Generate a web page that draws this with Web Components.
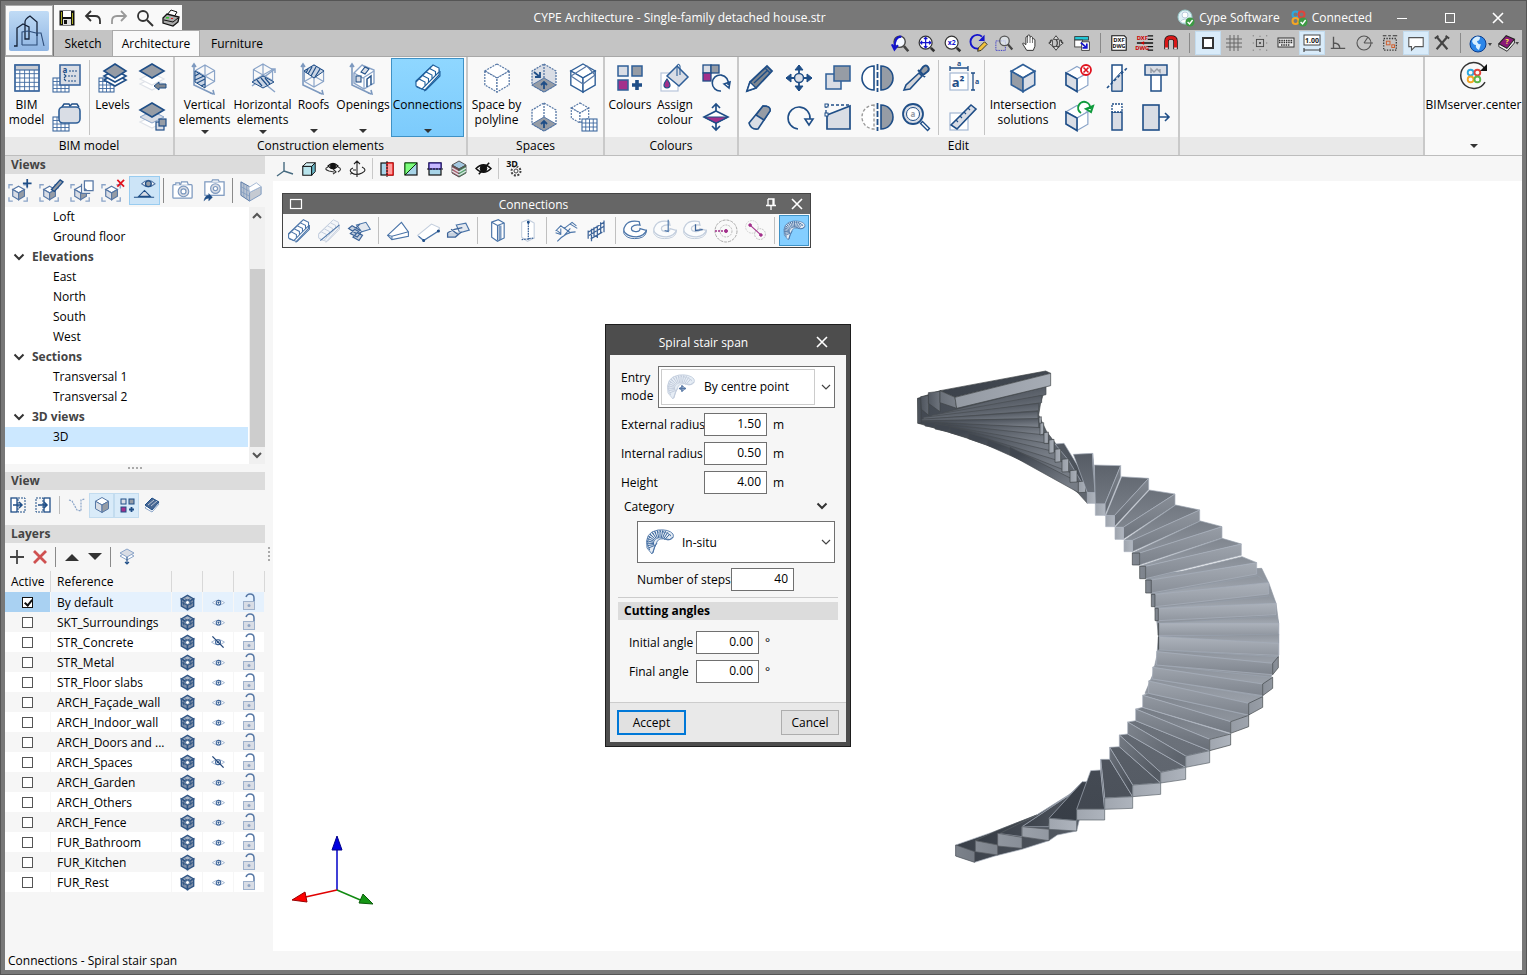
<!DOCTYPE html>
<html lang="en">
<head>
<meta charset="utf-8">
<title>CYPE Architecture</title>
<style>
html,body{margin:0;height:100%}
body{font:12px/15px "Open Sans","Noto Sans",sans-serif;color:#000;background:#787878}
</style>
</head>
<body>
<cy-app></cy-app>
<script>
/* ---------- drawing helpers ---------- */
const N='#1f4e87', F='#d9dde5', G='#969ca5', L='#8aa4c8', M='#a3308b', W='#fdfdfd';
const P=(d,f='none',s=N,w=1.5,x='')=>`<path d="${d}" fill="${f}" stroke="${s}" stroke-width="${w}" ${x}/>`;
const C=(x,y,r,f='none',s=N,w=1.5,e='')=>`<circle cx="${x}" cy="${y}" r="${r}" fill="${f}" stroke="${s}" stroke-width="${w}" ${e}/>`;
const R=(x,y,w,h,f='none',s=N,sw=1.5,e='')=>`<rect x="${x}" y="${y}" width="${w}" height="${h}" fill="${f}" stroke="${s}" stroke-width="${sw}" ${e}/>`;
const T=(x,y,t,size,fill=N,e='')=>`<text x="${x}" y="${y}" font-size="${size}" fill="${fill}" font-weight="bold" text-anchor="middle" font-family="Noto Sans,sans-serif" ${e}>${t}</text>`;
const D='stroke-dasharray="2 1"';
const cube=(x,y,h,t,l,r,s=N,w=1.5,e='')=>{
  const a=h*.87,b=h/2;
  return P(`M${x} ${y-h}l${a} ${b}l${-a} ${b}l${-a} ${-b}z`,t,s,w,e)+P(`M${x-a} ${y-b}l${a} ${b}v${h}l${-a} ${-b}z`,l,s,w,e)+P(`M${x+a} ${y-b}l${-a} ${b}v${h}l${a} ${-b}z`,r,s,w,e);
};
const wireCube=(x,y,h,s=L,w=1.2,e='')=>{
  const a=h*.87,b=h/2;
  return P(`M${x} ${y-h}l${a} ${b}v${h}l${-a} ${b}l${-a} ${-b}v${-h}zM${x} ${y-h}v${2*h}M${x-a} ${y-b}l${2*a} ${h}M${x+a} ${y-b}l${-2*a} ${h}`,'none',s,w,e);
};
const roomCube=(back,floor)=>P('M16 2l12 7v14l-12 7l-12-7V9z',back,'#5677a5',1.3,D)+P('M16 16l12 7l-12 7l-12-7z',floor,'#5677a5',1)+P('M16 2v14','none','#5677a5',1.3,D)+P('M16 27v-7M13 23l3-3l3 3','none',N,1.8);
const rhomb=(x,y,a,b,f,s=N,w=1.6)=>P(`M${x} ${y-b}l${a} ${b}l${-a} ${b}l${-a} ${-b}z`,f,s,w);
const grid=(x,y,w,h,n,m,s='#3f6aa0',f='#fff')=>{
  let d='';for(let i=1;i<n;i++)d+=`M${x+w*i/n} ${y}v${h}`;for(let i=1;i<m;i++)d+=`M${x} ${y+h*i/m}h${w}`;
  return R(x,y,w,h,f,s,1.1)+P(d,'none',s,.9);
};
const hatch=(pts,lines)=>P(pts,'#c9d4e4',N,1)+P(lines,'none',N,1.2);
const axes=P('M5 3v20l19 9M3 5l2-3l2 3M21 31l4 1l-1-4','none','#7d99bf',1.6);
const lock=P('M7 5q1-3 4-3q4 0 4 4v4','none','#5677a5',1.5)+R(4.5,9.5,11,8,F,'#9fb2cc',1)+C(10,13.5,1.5,'#8fa5c4','none',0);
const eye=P('M1 8Q10 1 19 8Q10 15 1 8z','#fff','#9bb1cf',1.3)+C(10,8,3.400,'#fff','#3d6499',1.6)+C(10,8,1,N,N,1);
const arcSteps=(c,lw=1)=>{ /* fan of treads seen from above */
  let s='';for(let i=0;i<15;i++){const a=(150+i*12)*Math.PI/180,o=13,n=6;
    s+=P(`M${(16+n*Math.cos(a)).toFixed(1)} ${(17+n*.8*Math.sin(a)).toFixed(1)}L${(16+o*Math.cos(a)).toFixed(1)} ${(16+o*.9*Math.sin(a)).toFixed(1)}l1 2`,'none',c,lw);}
  return P('M3 22Q0 6 14 4Q25 3 29 8Q31 13 24 14Q14 10 12 18L8 28z','#e6edf5',c,.8)+s+P('M9 27Q10 20 13 17M22 13q4 2 7-2','none',c,.9);
};
const stairs=(c,f='#fff',w=1.1)=>{
  let s=P('M3 18L18 4l8 3v5L12 27l-8-3z',f,c,w);
  for(let i=4;i>=0;i--){const x=3+i*3.5,y=19-i*3.500;s+=P(`M${x} ${y}l3-3l6 3v4l-3 3l-6-3z`,f,c,w);}
  return s+P('M11 28l2-1L27 13V8','none',c,w);
};
const zoomLens=(c='#222')=>C(10,9,6.5,'#f4f8ff',c,1.6)+P('M15 14l5 6','none',c,3);
const boxIcon=P('M1 11V7h4M16 7h4v4M1 20v4h4M16 24h4v-4','none',L,1.4)+cube(11,15.5,7,'#fff',F,G,'#5677a5',1.2);
const bim=(x,y,k)=>C(x-k,y-k,k*.85,'none','#2ba8e0',k*.55)+C(x+k,y-k,k*.85,'none','#e0443c',k*.55)+C(x-k,y+k,k*.85,'none','#f5a623',k*.55)+C(x+k,y+k,k*.85,'none','#5cb548',k*.55);
const tick=(x,y)=>C(x,y,4.5,'#3c9a44','none',0)+P(`M${x-2.4} ${y}l2 2l3-4`,'none','#fff',1.4);
const disc=(c,f='#fff')=>P('M2 15v3q3 6 12 6q11 0 13-7v-3',f,c,1.1)+P('M19 5Q8 3 4 9T4 18Q8 22 16 22Q25 21 27 15L20 13Q20 17 14 16Q9 15 11 11Q14 8 20 9z',f,c,1.4);

/* ---------- icon table: name -> [box size, drawing, shown size] ---------- */
const ICONS={
app:[40,`<defs><linearGradient id="a" x2="0" y2="1"><stop stop-color="#c0dbf5"/><stop offset="1" stop-color="#8fb5e3"/></linearGradient></defs>`+R(0,0,40,40,'url(#a)','none',0,'rx="2"')+P('M5 35h3V17l6-4l6 3v12h-4V11q0-3 5-6l7 6v14','none','#152238',1.3)+P('M13 34V21l6-1l8 2h5l3 13M13 34h15V22','none','#2d4c78',1.1)],
save:[16,R(1,1,14,14,'#111','#111',1)+R(4,1,8,6,'#fff','none',0)+R(4,9,8,6,'#ddd','none',0)+R(5,10,3,4,'#111','none',0)+R(2,2,1,12,'#a8a820','none',0)+R(13,3,1,11,'#a8a820','none',0)],
undo:[18,P('M7 2L2 7l5 5M2 7h9q5 0 5 5v3','none','#333',1.8)],
redo:[18,P('M11 2l5 5l-5 5M16 7H7q-5 0-5 5v3','none','#999',1.8)],
find:[18,C(7,7,5,'none','#333',1.8)+P('M11 11l6 6','none','#333',2)],
print:[18,P('M5 6l4-5l6 2l-3 5z','#fff','#111',1)+P('M1 9l4-4l12 3l-1 5l-5 4l-10-3z','#aaa','#111',1.3)+P('M2 11l9 2l5-4','none','#111',1)+R(4,8,3,1.5,'#3c3','none',0)+R(9,9,2,1,'#d22','none',0)],
user:[18,C(8,8,7,'#dff0f6','#9cc',1)+C(8,6,3,'#fff','#bcd',1)+P('M3 13q5-6 10 0','#fff','#bcd',1)+tick(13,13)],
conn:[18,C(5.500,5.500,3,'none','#2ba8e0',2)+C(11.500,5.500,3,'none','#e0443c',2)+C(5.500,12,3,'none','#f5a623',2)+tick(13,13)],
min:[14,P('M2 7.5h10','none','#fff',1)],max:[14,R(2.5,2.5,9,9,'none','#fff',1)],close:[14,P('M2 2l10 10M12 2L2 12','none','#fff',1.6)],
zPrev:[22,zoomLens('#444')+P('M12 3Q4 3 4 16M1 12l3 6l4-5','none','#1313cc',2.4),19],
zAll:[22,C(10,10,7.5,'#fff','#333',1.4)+P('M16 16l4 4','none','#333',3)+P('M10 4v12M4 10h12M8 6l2-2l2 2M8 14l2 2l2-2M6 8l-2 2l2 2M14 8l2 2l-2 2','none','#1313cc',1.4),19],
zx2:[22,C(10,10,7.5,'#fff','#333',1.4)+P('M16 16l4 4','none','#333',3)+T(10,13,'x2',8,'#1313cc'),19],
redraw:[22,P('M15 3A8 8 0 1 0 15 15','none','#1313cc',2.2)+P('M18 1v7h-7z','#1313cc','none',0)+P('M10 20l1-4l7-7l3 3l-7 7z','#f3c33c','#222',1),19],
zWin:[22,R(1,8,11,11,'none','#1313cc',1,'stroke-dasharray="1 1"')+C(11,8,5.5,'#e8f0f6aa','#555',1.5)+P('M15 12l5 6','none','#444',2.6),19],
pan:[22,P('M7 20L2 12q0-2 4 1V4q2-2 2 0V2q2-2 3 0v2q2-2 3 0v2q2-1 3 1v8l-2 5z','#fff','#333',1.2)+P('M8 4v7M11 4v7M14 5v6','none','#555',1),18],
orbit:[22,P('M11 3l3 4H8zM11 19l-3-4h6zM3 11l4-3v6zM19 11l-4 3V8z','#eee','#444',1.1)+P('M7 8q-3-1-2 3M15 8q3-1 2 3M7 14l2 2M15 14l-2 2M11 7q3 4 0 8','none','#444',1.4),20],
export:[22,R(2,3,16,4,'#22c8d8','#333',1)+R(2,7,9,8,'#fff','#333',1)+P('M10 9h9v10H10z','#fff','#333',1)+P('M9 10l7 6M16 11v5h-5','none','#1313cc',2),19],
dxf:[20,P('M2 2h14l2 2v14H2z','#fff','#111',1.2)+T(10,9,'DXF',6.5,'#111')+T(10,16,'DWG',6,'#111'),18],
dxfc:[20,T(7,7,'DXF',6.5,'#c00')+T(7,18,'DWG',6.5,'#c00')+P('M13 2h6M13 6h6M1 10h18M13 14h6M13 18h6','none','#111',1.4)+P('M9 8v4L5 10z','#c00','none',0),18],
magnet:[20,P('M5 17V8q0-4 5-4t5 4v9','none','#111',5)+P('M5 16V8q0-4 5-4t5 4v8','none','#d81818',3.4)+P('M3.5 16h3M13.500 16h3','none','#ddd',2),18],
square:[20,R(5,5,10,10,'#fff','#333',2)],
grid:[20,P('M6 2v16M14 2v16M2 6h16M2 14h16M10 2v16M2 10h16','none','#666',1)],
snap:[20,R(6,6,8,8,'none','#444',1)+R(9,9,2,2,'#444','none',0)+P('M2 2h1M10 2v1M17 2h1M2 10h1M17 10h1M2 18h1M10 17v1M17 18h1','none','#555',1),18],
keys:[20,R(2,5,16,9,'#eee','#333',1)+P('M3 7.500h14M3 9.500h14M5 12h9','none','#333',1.3,'stroke-dasharray="1.500 .8"')],
dims:[20,R(2,2,16,10,'#fff','#444',1)+T(10,10,'1.00',7,'#222')+P('M2 15v4M18 15v4M2 17h16','none','#444',1.2)],
angle:[20,P('M5 3v13h13M5 10q7 0 7 6M2 16h3','none','#555',1.5),18],
polar:[20,C(10,10,7,'none','#555',1.1)+P('M10 10h9M10 10l4-6','none','#555',1.1)],
sel:[20,R(3,5,14,13,'none','#333',1.4,'stroke-dasharray="1.500 1.500"')+R(6,8,4,4,'none','#d06030',1.1)+R(12,12,3,3,'none','#d06030',1.1)+P('M2 2h4M8 2h3M13 2h5','none','#333',1.2),18],
note:[20,P('M2 4h16v10H9l-4 4v-4H2z','#fff','#555',1.2),18],
tools:[20,P('M4 3l12 14M16 3L4 17','none','#444',2.4)+P('M2 5l4-3M14 2l4 3','none','#444',2),18],
globe:[24,C(10,12,8,'#2c86e8','#0a3c8c',1)+P('M4 9q3-6 8-4q0 4-3 4q1 4 4 3l-2 6q-4-2-3-5q-3 0-4-4z','#d8efff','none',0)+P('M20 11h4l-2 3z','#444','none',0)],
book:[24,P('M2 13L10 4l9 4l-8 10z','#8a1a78','#222',1.2)+P('M2 13v3l9 5l8-9V8l-8 10z','#eee','#222',1)+T(11,13,'?',8,'#ffe14a')+P('M20 11h4l-2 3z','#444','none',0),22],
bimTable:[32,grid(4,3,24,26,5,6)+R(4,3,24,5,'#c9ccd3','#3f6aa0',1.2)+R(4,3,24,26,'none','#3f6aa0',1.5)],
listTable:[32,grid(2,16,16,14,4,4)+R(9,3,20,20,F,'#3f6aa0',1.6)+T(14,11,'a',8)+P('M18 9h8M17 14h9M17 19h9','none',N,1.2,D)+P('M13 12l2 2l-2 2M13 17l2 2','none',N,1.1)],
folderTable:[32,grid(2,16,16,14,4,4)+P('M11 6l2-3h5l1 2l2-2h5l2 3','#fff',N,1.4)+R(8,6,21,16,F,'#2f5f98',1.6,'rx="4"')],
levels:[32,grid(2,16,15,14,4,4)+rhomb(18,18,11,6,'#fff')+rhomb(18,14,11,6,'#fff')+rhomb(18,9,11,7,G)],
level1:[32,rhomb(15,22,12,6,'#fff','#dfe3e9',1.2)+rhomb(15,17,12,6,'#fff','#dfe3e9',1.2)+rhomb(15,9,12,7,G)+P('M17 24l5-4v2h7v4h-7v2z','#7d858f',N,1)],
level2:[32,rhomb(15,21,12,6,'#fff','#dfe3e9',1.2)+rhomb(15,16,12,6,F,L,1)+rhomb(15,9,12,7,G)+R(19,21,8,8,F,N,1.2)+R(22,18,7,7,G,N,1.2)],
vert:[32,wireCube(16,14,11)+axes+hatch('M6 9l10 6v11L6 20z','M6 14l5-3M6 18l9-4M8 21l8-4M12 24l4-2')],
horiz:[32,wireCube(16,13,11)+P('M5 24L28 7M24 7h4v4M18 22l10 8','none',L,1.5)+hatch('M16 14l11 6l-11 6l-11-6z','M10 18l5 6M14 16l6 7M18 16l5 6')],
roofs:[32,wireCube(16,14,11)+axes+hatch('M16 3l10 6l-10 7l-10-7z','M10 7l-2 4M14 5l-4 7M18 5l-5 9M22 7l-5 8')],
open:[32,P('M7 11l8-8l12 5v13L17 27L7 21z','#fff',L,1.4)+P('M7 11l9 5l11-7M17 16v11M15 3l6 4','none',L,1.2)+axes+R(9,14,5,6,F,N,1.1)+P('M20 25v-8l4-3v9','none',N,1.4)+P('M14 10l4-5l4 2l-4 5z',F,N,1.1)],
conns:[32,`<g transform="translate(1 1)">${stairs('#1f5f9c','#fff',1.1)}</g>`],
space:[32,cube(16,16,14,'#fff','#fff','#fff','#5677a5',1.2,D)],
space2:[32,roomCube(F,G)+P('M6 10l6 5M12 10v5H7','none',N,1.8)],
space3:[32,roomCube('#fff',G)],
space4:[32,cube(16,16,14,'#fff','#fff','#fff','#2f5f98',1.4)+P('M4 14l16-10l8 9M4 14l12 8l12-9','none','#5677a5',1.2)],
space5:[32,cube(13,12,10,'#fff','#fff','#fff','#5677a5',1.1,D)+grid(15,18,15,12,4,3)],
colours:[32,R(4,4,10,10,F,'#2f5f98',1.5)+R(18,4,10,10,G,'#2f5f98',1.5)+R(4,18,10,10,M,'#2f5f98',1.5)+P('M23 18v10M18 23h10','none',N,3.6)],
assign:[32,R(2,11,17,18,'#fff','#b7c5da',1.2)+P('M18 4l11 11l-9 9l-12-10z',F,'#2f5f98',1.5)+P('M18 14V5q1-5 3-1v9','none','#2f5f98',1.1)+P('M8 17q6 8 0 9q-6-1 0-9z',M,N,1.2)],
col3:[32,R(3,3,8,8,F,N,1.3)+R(11,3,8,8,G,N,1.3)+R(3,11,8,8,M,N,1.3)+P('M21 29a8 8 0 1 1 7-6M24 22l5 4l1-6z','none',N,1.6)],
col4:[32,P('M16 3v26M12 7l4-4l4 4M12 25l4 4l4-4','none',N,1.7)+rhomb(16,16,12,6,'#fff')+P('M4 16h24l-12 6z',M,N,1.2)],
pencil:[32,P('M3 29l3-9L23 4l5 5L12 26z','#7f8790',N,1.8)+P('M3 29l3-9l6 6z','#fff',N,1.400)+P('M21 6l5 5M10 21L24 8','none',N,1.4)],
move:[32,P('M16 3v26M3 16h26','none',N,1.800)+P('M12 8l4-5l4 5zM12 24l4 5l4-5zM8 12l-5 4l5 4zM24 12l5 4l-5 4z',N,N,1)+C(16,16,4.5,F,N,1.5)],
copy:[32,R(4,12,15,15,F,'#2f5f98',1.5)+R(12,4,16,15,G,'#2f5f98',1.5)],
mirror:[32,P('M13 4a12 12 0 0 0 0 24z','#fff',N,1.6)+P('M20 4a12 12 0 0 1 0 24z',G,N,1.6)+P('M16.500 2v28','none',N,1.8,'stroke-dasharray="6 2"')],
mirror2:[32,P('M13 4a12 12 0 0 0 0 24z','#fff','#999',1.4,'stroke-dasharray="3 2"')+P('M20 4a12 12 0 0 1 0 24z',G,N,1.6)+P('M16.500 2v28','none',N,1.8,'stroke-dasharray="6 2"')],
pick:[32,P('M4 28l2-5L19 11l3 3L10 27z','#d5d5d8',N,1.600)+P('M18 8l7 7M20 9l3-4q3-3 5 0t-1 5l-4 3z',G,N,2)],
erase:[32,P('M5 22L19 5q8 0 7 5L14 28q-7 1-9-6z',F,N,1.6)+P('M12 14L19 5q8 0 7 5l-6 9z',G,N,1.5)],
rotate:[32,P('M15 28A11 11 0 1 1 27 18M22 18l4 6l4-6z','none',N,1.6)],
scale:[32,P('M5 14l23-9v23H5z',F,N,1.7)+P('M4 4h24M4 4v9','none',N,1.3,'stroke-dasharray="3 2"')+R(3,3,3,3,'#fff',N,1)+R(3,12,3,3,'#fff',N,1)],
find2:[32,C(13,13,10,F,N,1.8)+C(13,13,6.5,'#fff',N,1)+T(13,16,'a',8,G)+P('M21 21l8 8','none',N,4)+P('M22 22l6 6','none','#fff',1.4)],
textDim:[32,P('M4 6h18M4 4v5M22 4v5M27 11v17M25 11h4M25 28h4','none',N,1.3)+R(4,11,18,17,'#fff','#a3b7d3',1.2)+T(12,25,'a²',13,N,'font-family="Liberation Serif"')+T(13,4,'a',7)+T(31,22,'a',7)],
ruler:[32,R(4,12,18,17,'#fff','#a3b7d3',1.2)+P('M5 24L25 4l5 4L11 28z',F,N,1.6)+P('M10 19l2 2M14 15l2 2M18 11l2 2M22 7l2 2','none',N,1.1)],
solid:[32,cube(16,16,13.500,'#fff',G,F,'#2f5f98',1.6)],
solidX:[32,cube(15,17,12.5,'#fff',F,'#fff',L,1.2)+P('M4 11l11 6v12.500L4 23z',F,N,1.6)+C(24,8,5,'#fff','#e0121e',1.8)+P('M21.500 5.500l5 5M26.500 5.500l-5 5','none','#e0121e',1.6)],
solidR:[32,cube(15,17,12.5,'#fff',F,'#fff',L,1.2)+P('M4 11l11 6v12.500L4 23z',F,N,1.6)+P('M19 12a6 6 0 1 1 9-4M24 8l5 3l2-6z','#fff','#0f9a3c',2)],
wallCut:[32,R(11,3,10,26,'#fff',N,1.5)+P('M11 20L21 9v20H11z',F,N,1)+P('M6 26L27 5','none',N,1.6,'stroke-dasharray="3 2"')],
wallT:[32,R(11,10,10,19,'#fff',N,1.5)+R(5,3,22,10,F,N,1.5)+P('M11 11V7l3 3l3-3l3 3V7','none',G,1.4)],
wallTop:[32,R(11,11,10,18,F,N,1.5)+R(11,3,10,8,'#fff',N,1.3,D)],
wallExt:[32,R(3,4,16,25,F,N,1.6)+P('M19 16h9M25 12l4 4l-4 4','none',N,1.6)],
bimserver:[32,bim(16,15,3.4)+P('M27 21A13 13 0 1 1 27 8','none','#333',1.5)+P('M29 3v7h-7z','#111','none',0)],
vAdd:[26,boxIcon+P('M20 1v9M15.500 5.500h9','none',N,1.8),25],
vEdit:[26,boxIcon+P('M13 12L22 2l3 2l-9 10z',G,N,1.4),25],
vCopy:[26,boxIcon+P('M15 3h9v10h-9zM12 6v10h9','#fff','#5677a5',1.3),25],
vDel:[26,boxIcon+P('M17 2l7 7M24 2l-7 7','none','#e0121e',1.8),25],
vEye:[26,P('M10 6Q17-1 24 6Q17 12 10 6z','#fff','#5677a5',1.1)+C(17,6,3,G,N,1.4)+P('M2 20h21M7 19l6-6l6 6z',F,N,1.1),25],
cam:[26,R(3,7,20,14,'#fff','#7d99bf',1.3,'rx="1"')+P('M6 7V5h4v2M11 7l1-3h6l1 3','#fff','#7d99bf',1.2)+C(14,14,5.5,F,'#7d99bf',1.2)+C(14,14,2.6,'#fff','#7d99bf',1.3),25],
camGo:[26,R(4,4,20,14,'#fff','#7d99bf',1.3)+P('M11 4l1-2h6l1 2','#fff','#7d99bf',1.2)+C(15,11,5,F,'#7d99bf',1.2)+C(15,11,2.2,'#fff','#7d99bf',1.2)+P('M3 24q1-6 5-6v-2l4 4l-4 4v-3q-3 0-5 3z',N,N,.3),25],
vBox:[26,P('M2 4l9 5v15l-9-6z','#b9c3d1','#5677a5',1)+P('M5 6v14M8 8v14M2 9l9 5M2 14l9 5','none','#7d99bf',.8)+P('M11 15l12-6v8l-12 7z','#c5cad2','#7d99bf',1)+P('M11 15l-1-5l8-5l5 4z','#fff','#a3b7d3',1),25],
inL:[18,R(2,2,6,14,'#fff',N,1.3)+R(9,2,7,14,'none',N,1,D)+P('M4 9h9M10 6l3 3l-3 3','none',N,1.5)],
inR:[18,R(10,2,6,14,'#fff',N,1.3)+R(2,2,7,14,'none',N,1,D)+P('M4 9h9M10 6l3 3l-3 3','none',N,1.5)],
curve:[18,P('M1 4l3 1l5 9l4 1V4l4-1','none','#8aa4c8',1.2,D)],
cubeS:[18,cube(9,9,7.500,'#fff',F,G,'#5677a5',1)],
colS:[18,R(3,3,5,5,F,N,1)+R(11,3,5,5,G,N,1)+R(3,11,5,5,M,N,1)+P('M13.500 11v5M11 13.500h5','none',N,1.8)],
slabs:[18,P('M2 12l7-8l7 4l-7 8z','#fff',L,1)+P('M2 9l7-7l7 4l-7 8z','#486894',N,1)+P('M5 9l6-5M8 10l6-5','none','#d9dde5',.8)],
plus:[18,P('M9 2v14M2 9h14','none','#444',1.8)],
cross:[18,P('M3 3l12 12M15 3L3 15','none','#cf5151',2.8)],
up:[18,P('M2 13l7-7l7 7z','#333','none',0)],down:[18,P('M2 5h14l-7 7z','#333','none',0)],
layOut:[18,rhomb(9,8,7,4,'#fff',L,1)+rhomb(9,5,7,4,F,L,1)+P('M9 9v7M7 14l2 2l2-2','none',N,1.1)],
cubeD:[18,cube(9,9,7.500,'#a9b4c4','#8090a8','#8090a8','#2f5585',1.5)+P('M6 5l6 3M12 5L6 8M5 8v4M12.500 8v4M3 9l6 3l6-3','none','#2f5585',1)+P('M9 7l2 1v2l-2 1l-2-1V8z','#fff','#2f5585',.6),17],
eye:[20,`<g transform="translate(1 3) scale(.9 .9)">${eye}</g>`,15],
eyeOff:[20,`<g transform="translate(1 3) scale(.9 .9)">${eye}</g>`+P('M3 3l14 14','none','#23477a',1.6),16],
lock:[20,lock,20],
ax3:[18,P('M8 2v9L1 16M8 11l9 3','none','#476b80',1.4)],
box3:[18,P('M2 6h10v10H2z','#b8e4ec','#111',1.2)+P('M2 6l4-4h10l-4 4z','#d8f4f8','#111',1.1)+P('M12 6l4-4v10l-4 4z','#69b8c8','#111',1.1),16],
orb3:[18,P('M4 6Q9 1 14 6Q9 11 4 6z','#fff','#111',1.2)+C(9,6,2.500,'#111','#111',1)+P('M4 7q-5 2 1 4l5 1M14 7q5 2 0 5M9 9l3 3l-3 2','none','#333',1.1)],
turn3:[18,P('M9 1v16M6 4l3-3l3 3M5 8q-5 2-1 5t10 0t0-6M5 13l-3 1M8 10h-3','none','#222',1.1)],
sec1:[18,R(3,3,12,12,'#a8d4e8','#111',1.2)+R(9,3,6,12,'#ff9c9c','#e00000',1.2)+P('M9 1v16','none','#111',1,D)],
sec2:[18,R(3,3,12,12,'#a8d4e8','#111',1.2)+P('M3 15V3h12z','#7dfc7d','#0a6b0a',1)+P('M3 15L15 3','none','#111',1,D)],
sec3:[18,R(3,3,12,12,'#a8d4e8','#111',1.2)+R(3,3,12,6,'#c6b8ff','#20107c',1.2)+P('M1 9h16','none','#111',1,D)],
lay3:[18,cube(9,9,8,'#a4c8e0','#b06070','#5aa870','#555',1)+P('M2 8l7 4l7-4M2 11l7 4l7-4','none','#dfe6ea',1.2)+P('M2 6l7 4l7-4','none','#444',.8)],
hid3:[18,P('M1 9Q9 1 17 9Q9 17 1 9z','#fff','#111',1.4)+C(9,9,3.600,'#111','#111',1)+P('M15 3L4 15','none','#111',1.6),17],
set3:[18,C(12,11,4.5,'none','#444',2,'stroke-dasharray="2 1.500"')+C(12,11,2,'none','#444',1)+T(8,7,'3D',9,'#111','paint-order="stroke" stroke="#f6f6f6" stroke-width="1"')],
wbox:[14,R(1.500,2.500,11,9,'none','#fff',1.2)],pin:[14,P('M4 2h6v6M4 2v6M2 8.500h10M7 8v5M9 2v6','none','#fff',1.3)],
s1:[30,stairs('#4a74a8','#fff',1.2),26],s2:[30,stairs('#c3cedd','#f4f6f9',1.1)+P('M5 26L27 8','none','#4a74a8',1.2),26],
s3:[30,P('M12 8l11-3l5 8l-10 3z','#e3e8ef','#4a74a8',1.2)+P('M3 12l4-3l9 5l-4 4zM5 18l5-5l7 4l-4 5zM8 22l5-5l6 3l-4 6zM16 7l-5 5','#c9d3e0','#3d6499',1.4),26],
r1:[30,P('M3 20L19 5l8 11v5L8 25z','#fff','#4a74a8',1.3)+P('M3 20l5 1l19-5M8 21v4','none','#4a74a8',1.2),26],
r2:[30,P('M3 20L19 7l9 4v4L10 26z','#fff','#c3cedd',1.3)+P('M4 21l6 5l17-11','none','#4a74a8',1.3)+C(10,26,1,N)+C(27,15,1,N),26],
r3:[30,P('M13 8l11-2l4 8l-11 3z','#e3e8ef','#4a74a8',1.3)+P('M3 17l8-4l9-2M3 17v5h9l7-6M7 13l8 6','#c9d3e0','#3d6499',1.5),26],
e1:[30,P('M8 5l8-3l7 4v18l-8 4l-7-5z','#fff','#4a74a8',1.4)+P('M8 5l7 4l8-3M15 9v18M19 9v17M17 8v19','none','#4a74a8',1.3),25],
e2:[30,P('M8 5l8-3l7 4v18l-8 4l-7-5z','#fff','#c3cedd',1.3)+P('M16 6v20M8 26l15-2','none','#3d6499',1.5,D)+C(16,5,1,N),25],
b1:[30,P('M3 15l6-6l4 3l9-7l5 4M4 14l5 4v-6M5 27q10-11 21-11M12 11l8 6M20 7l8 5M13 20l7-8M3 17l6 2','none','#4a74a8',1.2),26],
b2:[30,P('M5 25V15M9 28V13M12 23V11M16 24V9M20 19V5M24 17V3M5 17L24 5M6 21L24 10M8 25l14-8','none','#3d6499',1.5),25],
d1:[30,disc('#4a74a8'),27],d2:[30,disc('#c3cedd','#fbfcfd')+P('M18 3v13l-4-1','none','#4a74a8',1.3),27],d3:[30,disc('#c3cedd','#fbfcfd')+P('M15 8v7l8-1','none','#3d6499',1.4),27],
d4:[30,C(15,15,11,'none','#aaa',1,'stroke-dasharray="3 1"')+C(15,15,6,'none','#bbb',1,D)+P('M4 15h9','none',M,1.4,D)+C(15,15,1.500,M,M,1)],
d5:[30,C(11,11,7,'none','#ccc',1,D)+C(20,19,6,'none','#bbb',1,D)+P('M9 9l11 10','none',M,1.300)+C(9,9,1.500,M,M,1)+C(21,20,1.500,M,M,1),27],
spiral:[32,arcSteps('#3f6a9f',1)],spiralS:[32,arcSteps('#3f6a9f',1),25],spiralL:[32,arcSteps('#bfcada',.9)+P('M17 14v7M14 17.500h7','none','#5677a5',1.3)+C(17.500,17.500,2,'none','#5677a5',1)],
chev:[12,P('M2 4l4 4l4-4','none','#444',1.2)],chevB:[12,P('M1.500 3.500l4.500 4.500l4.500-4.500','none','#333',2)],
chevU:[12,P('M2 8l4-4l4 4','none','#555',2)],chevD:[12,P('M2 4l4 4l4-4','none','#555',2)],
tri:[10,P('M1 3h8l-4 4z','#333','none',0)]
};

const define=(name,css,render)=>customElements.define(name,class extends HTMLElement{
  constructor(){super();this.attachShadow({mode:'open'});}
  connectedCallback(){this.shadowRoot.innerHTML=`<style>*{box-sizing:border-box}:host{box-sizing:border-box}:host{display:block}button{font:inherit;color:inherit;background:none;border:1px solid transparent;padding:0;margin:0}${css}</style>${render(this)}`;}
});
const at=(e,n,d='')=>e.getAttribute(n)??d;

define('cy-icon',':host{display:block;flex:none}svg{display:block;overflow:visible}',e=>{
  const [s,d,z=s]=ICONS[at(e,'name')];return `<svg width="${z}" height="${z}" viewBox="0 0 ${s} ${s}" aria-hidden="true">${d}</svg>`;});

/* square tool button; width and height come from custom properties */
define('cy-tool',`:host{flex:none}button{display:grid;place-items:center;width:var(--tw,26px);height:var(--th,26px)}
:host([active]) button{background:var(--on,#d9ebf9);border-color:var(--onb,#c3dcef)}`,
e=>`<button aria-label="${at(e,'icon')}"><cy-icon name="${at(e,'icon')}"></cy-icon></button>`);
define('cy-sep',':host{flex:none;width:var(--sw,11px);display:flex;justify-content:center;align-self:stretch;padding:var(--sp,2px) 0}i{width:1px;background:var(--sc,#8a8a8a)}',()=>'<i></i>');

/* ribbon */
define('cy-big',`:host{flex:none;width:var(--w)}button{width:100%;height:79px;display:flex;flex-direction:column;align-items:center;padding-top:3px;text-align:center;white-space:nowrap}
span{flex:1;padding-top:3px;white-space:pre-line;margin:0 -6px}:host([active]) button{background:linear-gradient(#8fd7ff,#7ccbfc);border-color:#3f92c6}`,
e=>`<button><cy-icon name="${at(e,'icon')}"></cy-icon><span><slot></slot></span>${e.hasAttribute('menu')?'<cy-icon name="tri"></cy-icon>':''}</button>`);
define('cy-pair',':host{flex:none;--tw:39px;--th:39px;width:39px}',e=>at(e,'icons').split(' ').map(n=>`<cy-tool icon="${n}"></cy-tool>`).join(''));
define('cy-group',`:host{flex:0 0 var(--w);display:flex;flex-direction:column;border-right:2px solid #c9c9c9;background:#f9f9f9}
.b{display:flex;height:80px;padding:1px 0 0 1px}.l{height:18px;line-height:18px;background:#e9e9e9;text-align:center}`,
e=>`<div class="b"><slot></slot></div><div class="l">${at(e,'label')}</div>`);

define('cy-ribbon',':host{display:flex;height:100px;background:#f9f9f9;border-top:1px solid #a8a8a8;border-bottom:1px solid #bdbdbd;--sw:5px;--sc:#c4c4c4}cy-group:nth-last-child(2){flex:1}.srv{width:97px;display:flex;flex-direction:column;align-items:center;padding:3px 0;height:98px}.srv span{flex:1;padding-top:4px}',
()=>`<cy-group label="BIM model" style="--w:170px"><cy-big icon="bimTable" style="--w:41px">BIM
model</cy-big><cy-pair icons="listTable folderTable"></cy-pair><cy-sep style="--sw:6px"></cy-sep><cy-big icon="levels" style="--w:41px">Levels</cy-big><cy-pair icons="level1 level2"></cy-pair></cy-group>
<cy-group label="Construction elements" style="--w:293px"><cy-big menu icon="vert" style="--w:57px">Vertical
elements</cy-big><cy-big menu icon="horiz" style="--w:59px">Horizontal
elements</cy-big><cy-big menu icon="roofs" style="--w:43px">Roofs</cy-big><cy-big menu icon="open" style="--w:56px">Openings</cy-big><cy-big menu active icon="conns" style="--w:73px">Connections</cy-big></cy-group>
<cy-group label="Spaces" style="--w:137px"><cy-big icon="space" style="--w:55px">Space by
polyline</cy-big><cy-pair icons="space2 space3"></cy-pair><cy-pair icons="space4 space5"></cy-pair></cy-group>
<cy-group label="Colours" style="--w:134px"><cy-big icon="colours" style="--w:48px">Colours</cy-big><cy-big icon="assign" style="--w:42px">Assign
colour</cy-big><cy-pair icons="col3 col4"></cy-pair></cy-group>
<cy-group label="Edit" style="--w:441px"><cy-pair icons="pencil erase"></cy-pair><cy-pair icons="move rotate"></cy-pair><cy-pair icons="copy scale"></cy-pair><cy-pair icons="mirror mirror2"></cy-pair><cy-pair icons="pick find2"></cy-pair><cy-sep style="--sw:7px"></cy-sep><cy-pair icons="textDim ruler"></cy-pair><cy-sep style="--sw:7px"></cy-sep><cy-big icon="solid" style="--w:70px">Intersection
solutions</cy-big><cy-pair icons="solidX solidR"></cy-pair><cy-pair icons="wallCut wallTop"></cy-pair><cy-pair icons="wallT wallExt"></cy-pair></cy-group>
<cy-group></cy-group><button class="srv"><cy-icon name="bimserver"></cy-icon><span>BIMserver.center</span><cy-icon name="tri"></cy-icon></button>`);

/* title bar, tabs and quick tools */
const tools=s=>s.split(' ').map(n=>n==='|'?'<cy-sep></cy-sep>':n[0]==='*'?`<cy-tool active icon="${n.slice(1)}"></cy-tool>`:`<cy-tool icon="${n}"></cy-tool>`).join('');
define('cy-header',`:host{display:grid;grid-template-columns:49px 1fr;grid-template-rows:25px 26px;padding-top:4px}
.app{grid-row:1/3;background:#fafafa;border:1px solid #aaa;display:grid;place-items:center;width:48px}
.t{display:flex;color:#fff;align-items:center;min-width:0}
.q{display:flex;background:#f9f9f9;width:128px;height:25px;align-items:center;--tw:26px;--th:24px}
h1{font:inherit;flex:1;text-align:center;margin:0}.u{display:flex;align-items:center;gap:4px}.u+.u{margin-left:10px}.wins{display:flex;--tw:48px;--th:25px;margin-left:6px}
.r{display:flex;background:#c4c4c4;align-items:center;min-width:0}
nav{display:flex;flex:1;align-self:stretch}nav a{color:#000;text-decoration:none;text-align:center;width:88px;line-height:25px;border:1px solid transparent;border-bottom:0}
nav a:first-child{width:58px}nav a.on{background:#f9f9f9;border-color:#aaa}nav a:last-child{width:74px}
.x{display:flex;align-items:center;--tw:26px;--th:24px}.w{--tw:28px;display:flex}`,
()=>`<button class="app" aria-label="Application menu"><cy-icon name="app"></cy-icon></button>
<div class="t"><div class="q">${tools('save undo redo find print')}</div><h1>CYPE Architecture - Single-family detached house.str</h1>
<span class="u"><cy-icon name="user"></cy-icon>Cype Software</span><span class="u"><cy-icon name="conn"></cy-icon>Connected</span><div class="wins">${tools('min max close')}</div></div>
<div class="r"><nav><a href="#">Sketch</a><a href="#" class="on">Architecture</a><a href="#">Furniture</a></nav>
<div class="x">${tools('zPrev zAll zx2 redraw zWin pan orbit export | dxf dxfc magnet | *square grid snap keys *dims angle polar sel *note tools |')}<div class="w">${tools('globe book')}</div></div></div>`);

/* left docks */
define('cy-heading',':host{height:18px;line-height:17px;background:#dcdcdc;padding-left:6px;font-weight:bold;color:#444;flex:none}',()=>'<slot></slot>');
define('cy-bar',':host{display:flex;align-items:center;flex:none;height:var(--h)}',e=>tools(at(e,'tools')));
define('cy-tree',`:host{display:flex;height:257px;background:#fff}ul{list-style:none;margin:0;padding:0 1px 0 0;flex:1}li{height:20px;line-height:20px;padding-left:48px}
li.g{font-weight:bold;color:#444;padding-left:8px;display:flex;align-items:center;gap:7px}li.s{background:#cce8ff}
.sb{width:16px;background:#f0f0f0;display:flex;flex-direction:column;align-items:center;padding:3px 0}.gap{height:47px}.th{background:#cdcdcd;width:15px;flex:1;margin-bottom:2px}`,
()=>{const rows=['Loft','Ground floor','#Elevations','East','North','South','West','#Sections','Transversal 1','Transversal 2','#3D views','3D'];
return `<ul>${rows.map((r,i)=>r[0]==='#'?`<li class="g"><cy-icon name="chevB"></cy-icon>${r.slice(1)}</li>`:`<li class="${i===11?'s':''}">${r}</li>`).join('')}</ul><div class="sb"><cy-icon name="chevU"></cy-icon><div class="gap"></div><div class="th"></div><cy-icon name="chevD"></cy-icon></div>`;});
define('cy-layers',`table{border-collapse:separate;border-spacing:0;table-layout:fixed;width:260px}th{font-weight:normal;text-align:left;height:21px;padding:0 0 0 6px;border-right:1px solid #d8d8d8}
td{height:20px;padding:0 0 0 6px;border-right:1px solid #f6f6f6;white-space:nowrap}td.i{padding:0}td.i cy-icon{width:max-content;margin:auto}tbody tr:nth-child(odd){background:#fff}tbody tr:first-child{background:#e5f1fd}tr:first-child td:first-child{background:#a9d1f2}
td:first-child{padding:0}input{appearance:none;width:11px;height:11px;margin:0 auto;display:block;border:1px solid #555;background:#fff;position:relative}
input:checked{border-color:#111}input:checked::after{content:"";position:absolute;left:3px;top:0;width:3px;height:6px;border:solid #111;border-width:0 2px 2px 0;transform:rotate(40deg)}`,
()=>{const n=['By default','SKT_Surroundings','STR_Concrete','STR_Metal','STR_Floor slabs','ARCH_Façade_wall','ARCH_Indoor_wall','ARCH_Doors and ...','ARCH_Spaces','ARCH_Garden','ARCH_Others','ARCH_Fence','FUR_Bathroom','FUR_Kitchen','FUR_Rest'];
return `<table><colgroup><col style="width:46px"><col style="width:121px"><col style="width:31px"><col style="width:31px"><col style="width:31px"></colgroup><thead><tr><th>Active</th><th>Reference</th><th></th><th></th><th></th></tr></thead><tbody>${n.map((t,i)=>`<tr><td><input type="checkbox" aria-label="${t}" ${i?'':'checked'}></td><td>${t}</td><td class="i"><cy-icon name="cubeD"></cy-icon></td><td class="i"><cy-icon name="${i===2||i===8?'eyeOff':'eye'}"></cy-icon></td><td class="i"><cy-icon name="lock"></cy-icon></td></tr>`).join('')}</tbody></table>`;});
define('cy-docks',`:host{width:260px;display:flex;flex-direction:column;background:#f6f6f6;flex:none}
.v{--h:33px;--tw:31px;--th:29px;--sw:7px;--sp:4px;--on:#cce4f7;--onb:#99ccf0}.d{height:8px;display:grid;place-items:center}.d i{width:14px;border-top:2px dotted #aaa}
.w{--h:35px;--tw:25px;--th:25px;--sw:9px;--sp:6px;--sc:#bbb;padding-bottom:5px}.l{--h:28px;--tw:23px;--th:23px;--sw:9px;--sp:4px}`,
()=>`<cy-heading>Views</cy-heading><cy-bar class="v" tools="vAdd vEdit vCopy vDel *vEye | cam camGo | vBox"></cy-bar><cy-tree></cy-tree><div class="d"><i></i></div>
<cy-heading>View</cy-heading><cy-bar class="w" tools="inL inR | curve *cubeS *colS slabs"></cy-bar><cy-heading>Layers</cy-heading><cy-bar class="l" tools="plus cross | up down | layOut"></cy-bar><cy-layers></cy-layers>`);

/* 3D model: spiral staircase drawn at three units per pixel */
define('cy-stair','svg{display:block;width:100%}',()=>{
  let s='',defs='',n=0;
  const rgb=(v)=>`rgb(${v-6|0},${v|0},${v+9|0})`;
  const q=(pts,a,b,edge,dir='x2="1" y2="0"')=>{const id='g'+n++;defs+=`<linearGradient id="${id}" ${dir}><stop stop-color="${rgb(a)}"/><stop offset="1" stop-color="${rgb(b)}"/></linearGradient>`;
    s+=`<polygon points="${pts.join(' ')}" fill="url(#${id})" stroke="${edge}" stroke-width="2" stroke-linejoin="round"/>`;};
  const LE='#a9b1bc',DE='#3e4246',V='x2="0" y2="1"';
  /* body behind the middle treads */
  q([[738,640],[1085,625],[1106,668],[1128,730],[1136,790],[1136,885],[1118,940],[1086,1010],[1040,1075],[735,1000],[758,945],[770,890],[776,826],[765,745],[754,703]],150,150,'#8e96a2');
  /* top fan */
  q([[53,115],[120,92],[170,140],[437,80],[422,128],[416,165],[440,215],[480,268],[530,330],[588,398],[562,430],[535,400],[480,352],[400,314],[300,268],[200,234],[150,218],[55,190]],72,104,DE);
  [[438,80,104,130,158,168],[425,106,128,95,166,174],[416,130,152,70,172,178],[414,154,176,60,178,183],[416,176,203,56,182,187],[424,203,228,58,184,190],[436,225,254,75,186,198],[452,252,280,105,191,207],[468,276,307,150,200,218],[488,306,336,205,219,236],[512,338,367,262,238,256],[538,368,399,330,262,284]].forEach(([x,a,b,l,c,d])=>{
    q([[l,c],[x,a],[x,b],[l,d]],70,124,'#474b50','x1=".2" y1=".1" x2=".75" y2=".9"');});
  q([[465,252],[492,250],[530,312],[562,360],[564,398],[505,300]],92,76,LE);
  [[417,172,186,424,205],[420,190,225,431,222],[432,218,250,445,250],[447,240,280,462,278],[465,268,307,482,305],[486,298,336,506,335],[510,332,367,531,366],[535,365,398,557,397]].forEach(([x,a,b,r,c])=>q([[x,a],[r,a-2],[r,c],[x,b]],158,174,DE));
  q([[53,115],[64,118],[64,190],[53,190]],90,74,DE);q([[62,110],[86,106],[86,166],[64,148]],84,104,DE);q([[85,98],[120,94],[120,155],[85,130]],88,116,DE);
  q([[120,92],[437,33],[452,40],[165,112]],66,72,DE);q([[120,92],[165,112],[170,145],[120,128]],112,128,DE);q([[165,112],[452,40],[452,77],[170,145]],154,172,DE);
  /* treads that rise on the right */
  const O=[[578,280,520,283,562,588,398,430],[662,317,583,315,586,615,432,466],[746,355,665,350,617,643,467,500],[825,402,748,390,645,670,502,538],[899,450,827,435,672,697,541,575],[966,500,901,483,697,719,579,615],[1024,552,966,535,719,737,619,656],[1070,608,1026,590,737,754,660,699],[1106,668,1072,647,754,765,703,740],[1128,730,1106,708,765,775,745,782],[1136,790,1130,768,774,776,790,826],[1136,850,1136,822,775,776,830,870]];
  O.forEach(([x,y,px,py,l,r,a,b],i)=>{const t=98+Math.min(i,8)*7,h=i<1?32:i>9?36:34;
    q([[px,py],[x,y],[r,a],[l,a]],t-6,t+14,i>3?'#969eaa':LE,V);
    q([[x,y],[x,y+h],[r,b],[r,a]],t+24,t-4,LE,V);
    q([[l,a],[r,a],[r,b],[l,b]],i>4?136:164,i>4?130:182,i>4?DE:LE);});
  /* treads that turn towards the viewer */
  const Q=[[650,155,195,998,190,224,1015,170,203,655,150],[638,202,237,968,252,287,998,232,265],[626,243,280,926,310,345,968,290,322],[608,286,322,872,365,400,926,346,380],[587,327,362,809,418,452,872,402,435],[563,366,402,737,468,502,809,452,488],[538,405,440,662,517,549,737,502,538],[509,442,478,578,555,590,662,549,583],[482,478,510,494,594,628,578,590,625],[452,512,545,410,628,660,494,628,660],[427,545,560,327,655,688,410,662,693]];
  s+='<g transform="translate(120 720)">';
  q([[47,735],[170,692],[290,645],[385,585],[440,545],[418,660],[410,693],[352,705],[327,722],[246,748],[165,768],[104,787],[47,768]],62,94,LE);
  q([[385,587],[427,545],[330,655],[327,680],[246,680]],66,88,LE);q([[290,645],[385,587],[246,680],[246,710],[173,700]],66,84,LE);q([[170,692],[290,645],[180,700],[173,735],[106,722]],60,74,'#555a5e');
  Q.slice().reverse().forEach(([ix,a,b,x,y,z,rx,ry,rz],k)=>{const i=10-k,pr=Q[i-1],jx=pr?pr[0]:655,jy=pr?pr[2]:150,t=i<3?152:150-(i-2)*10;
    q([[ix,a],[jx,jy],[rx,ry],[x,y]],t-6,t+(i<5?8:-8),i<4?'#9ca4b0':LE,V);
    if(i<9)q([[ix,a],[ix,b],[x,z],[x,y]],t+12,t-20,LE,i<5?V:'x2="1" y2=".5"');
    q([[x,y],[rx,ry],[rx,rz],[x,z]],i<4?138+i*6:166,i<4?146+i*6:180,i<5?DE:'#596068');});
  [[246,680,710,327,688,722],[173,700,738,246,712,745],[106,722,755,173,735,765],[47,735,768,104,755,787]].forEach(([x,a,b,r,c,d],i)=>q([[x,a],[r,c],[r,d],[x,b]],160-i*10,152-i*10,'#565b61'));
  s+='</g>';
  return `<svg viewBox="0 0 1170 1530" role="img" aria-label="Spiral staircase"><defs>${defs}</defs>${s}</svg>`;});
define('cy-axes','svg{display:block}',()=>`<svg width="84" height="74" role="img" aria-label="Axes"><g stroke-width="1.500"><path d="M46 56V12" stroke="#0000c8"/><path d="M46 56L10 64" stroke="#e00000"/><path d="M46 56l28 12" stroke="#118a11"/></g><path d="M46 2l5 14h-10z" fill="#0000e0" stroke="#00008a"/><path d="M1 66l13-8l2 10z" fill="#f00" stroke="#900"/><path d="M82 70l-10-10l-4 9z" fill="#169616" stroke="#0a5c0a"/></svg>`);

define('cy-palette',`:host{width:529px;height:55px;border:1px solid #444;background:#f9f9f9}header{display:flex;align-items:center;height:20px;background:#666;color:#fff;padding:0 6px;gap:12px}header span{flex:1;text-align:center}
.r{display:flex;padding:1px 1px 0;--tw:30px;--th:31px;--sw:9px;--sc:#c0c0c0;--on:#84ceff;--onb:#3f92c6}`,
()=>`<header><cy-icon name="wbox"></cy-icon><span>Connections</span><cy-icon name="pin"></cy-icon><cy-icon name="close"></cy-icon></header><div class="r">${tools('s1 s2 s3 | r1 r2 r3 | e1 e2 | b1 b2 | d1 d2 d3 d4 d5 | *spiralS')}</div>`);

/* dialog */
define('cy-field',':host{display:flex;align-items:center;height:23px;white-space:nowrap}label{width:var(--lw)}input{width:63px;height:23px;border:1px solid #707070;background:#fff;font:inherit;text-align:right;padding:0 5px 2px;margin:0;border-radius:0}span{padding-left:6px}',
e=>`<label for="f">${at(e,'label')}</label><input id="f" value="${at(e,'value')}"><span>${at(e,'unit')}</span>`);
define('cy-combo',`:host{display:grid;height:42px;border:1px solid #707070;background:#fff;flex:1;align-items:center;padding:2px}
cy-icon{grid-area:1/1;pointer-events:none;z-index:1}.i{justify-self:start;margin-left:4px}.c{justify-self:end}
select{grid-area:1/1;appearance:none;border:0;background:none;font:inherit;color:inherit;height:36px;padding:0 0 0 42px;width:100%;margin:0;outline:0}:host([framed]) select{border:1px solid #ccc;width:calc(100% - 17px)}`,
e=>`<cy-icon class="i" name="${at(e,'icon')}"></cy-icon><select aria-label="${at(e,'label')}"><option>${at(e,'value')}</option></select><cy-icon class="c" name="chev"></cy-icon>`);
define('cy-dialog',`:host{width:246px;height:423px;border:1px solid #1e1e1e;background:#4d4d4d;padding:0 4px 4px;display:flex;flex-direction:column}
header{height:30px;display:flex;align-items:center;color:#fff;padding:4px 17px 0 0}header span{flex:1;text-align:center;padding-right:18px}
main{background:#f6f6f6;flex:1;padding:11px 11px 0}.e{display:flex;align-items:center;gap:6px;line-height:18px;margin-bottom:5px}.e span{width:31px}
.s{display:grid;gap:6px;--lw:83px}.c{display:flex;justify-content:space-between;align-items:center;height:27px;padding:0 7px 3px 3px}.n{margin:5px 0 6px 16px;--lw:94px}.k{margin-left:16px}
hr{border:0;border-top:1px solid #ccc;margin:0 -3px 4px}h2{font:inherit;font-weight:bold;line-height:18px;background:#dcdcdc;margin:0 -3px 11px;padding:0 6px}.a{--lw:67px;margin-left:8px}
footer{height:40px;background:#e9e9e9;border-top:1px solid #ccc;display:flex;justify-content:space-between;padding:7px 7px 0}footer button{width:58px;height:25px;background:#e1e1e1;border:1px solid #adadad}footer button:first-child{width:69px;border:2px solid #0078d7}`,
()=>`<header><span>Spiral stair span</span><cy-icon name="close"></cy-icon></header><main><div class="e"><span>Entry mode</span><cy-combo framed icon="spiralL" label="Entry mode" value="By centre point"></cy-combo></div>
<div class="s"><cy-field label="External radius" value="1.50" unit="m"></cy-field><cy-field label="Internal radius" value="0.50" unit="m"></cy-field><cy-field label="Height" value="4.00" unit="m"></cy-field></div>
<div class="c">Category<cy-icon name="chevB"></cy-icon></div><cy-combo class="k" icon="spiral" label="Category" value="In-situ"></cy-combo><cy-field class="n" label="Number of steps" value="40"></cy-field><hr><h2>Cutting angles</h2>
<div class="s a"><cy-field label="Initial angle" value="0.00" unit="°"></cy-field><cy-field label="Final angle" value="0.00" unit="°"></cy-field></div></main><footer><button>Accept</button><button>Cancel</button></footer>`);

define('cy-app',`:host{height:100vh;display:flex;flex-direction:column;border:1px solid #555;padding:0 4px 4px;background:#787878}
.m{flex:1;display:flex;min-height:0;background:#f6f6f6}.sp{width:8px;flex:none;display:grid;place-items:center}.sp i{height:14px;border-left:2px dotted #aaa}
.v{flex:1;display:flex;flex-direction:column;min-width:0}.tb{--h:25px;--tw:24px;--th:24px;--sw:6px;--sc:#c8c8c8}.c{flex:1;background:#fff;position:relative;overflow:hidden}
cy-palette{position:absolute;left:9px;top:12px}cy-dialog{position:absolute;left:332px;top:143px}cy-stair{position:absolute;left:627px;top:179px;width:390px}cy-axes{position:absolute;left:18px;top:653px}
.st{height:19px;line-height:19px;background:#f6f6f6;padding-left:3px;flex:none}`,
()=>`<cy-header></cy-header><cy-ribbon></cy-ribbon><div class="m"><cy-docks></cy-docks><div class="sp"><i></i></div><div class="v"><cy-bar class="tb" tools="ax3 box3 orb3 turn3 | sec1 sec2 sec3 lay3 hid3 | set3"></cy-bar><div class="c"><cy-palette></cy-palette><cy-stair></cy-stair><cy-axes></cy-axes><cy-dialog></cy-dialog></div></div></div><div class="st">Connections - Spiral stair span</div>`);
</script>
</body>
</html>
